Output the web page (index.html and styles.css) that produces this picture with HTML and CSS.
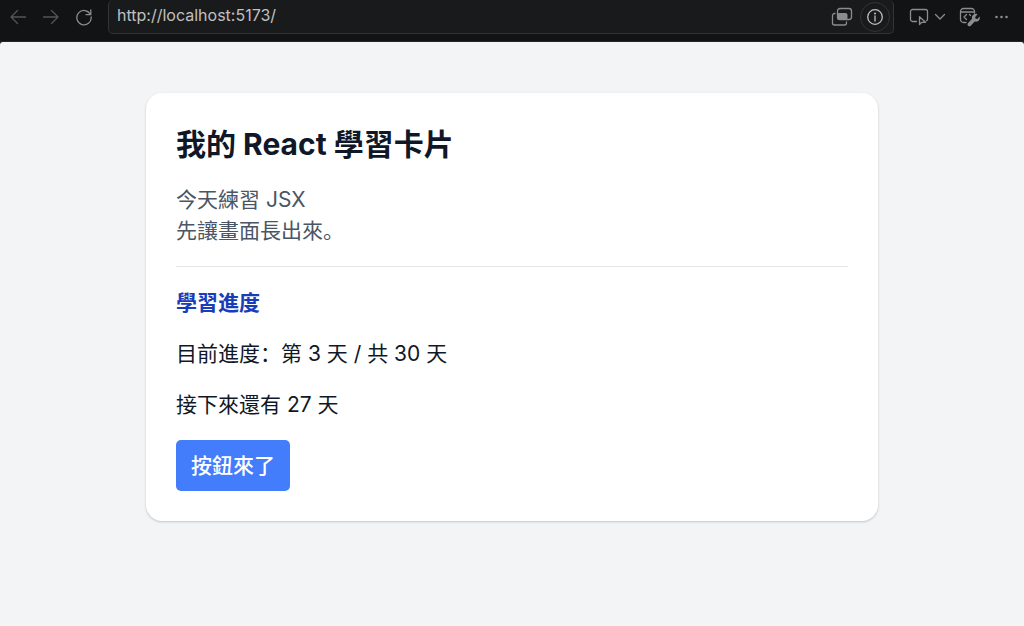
FILE: index.html
```
<!DOCTYPE html>
<html lang="zh-CN">

<head>
    <meta charset="UTF-8">
    <meta name="viewport" content="width=device-width, initial-scale=1.0">
    <title>我的 React 學習卡片</title>
    <link rel="stylesheet" href="styles.css">
</head>

<body>
    <header class="toolbar">
        <nav class="nav">
            <button class="icon-btn dim" type="button" aria-label="上一頁">
                <svg width="18" height="18" viewBox="0 0 18 18"><path d="M16.500 9H2M8.500 2.500L2 9l6.500 6.500" /></svg>
            </button>
            <button class="icon-btn dim" type="button" aria-label="下一頁">
                <svg width="18" height="18" viewBox="0 0 18 18"><path d="M1.500 9H16M9.500 2.500L16 9l-6.500 6.500" /></svg>
            </button>
            <button class="icon-btn" type="button" aria-label="重新整理">
                <svg width="18" height="18" viewBox="0 0 18 18"><path d="M15.500 6.500A7.200 7.200 0 1 0 16.200 9M15.800 2v4.700h-4.700" /></svg>
            </button>
        </nav>
        <div class="address">
            <input class="url" type="text" value="http://localhost:5173/" aria-label="網址">
            <button class="icon-btn" type="button" aria-label="視窗">
                <svg width="22" height="20" viewBox="0 0 22 20">
                    <rect x="6.500" y="1.500" width="14" height="11" rx="2.500" />
                    <path d="M4 6.500h-.5a2 2 0 0 0-2 2v7.500a2 2 0 0 0 2 2h10a2 2 0 0 0 2-2v-1" />
                    <rect class="solid" x="6" y="6" width="10.500" height="7" rx="2" />
                </svg>
            </button>
            <button class="icon-btn info" type="button" aria-label="網站資訊">
                <svg width="18" height="18" viewBox="0 0 18 18">
                    <circle cx="9" cy="9" r="7.300" />
                    <path d="M9 8v5" />
                    <circle class="solid" cx="9" cy="5.500" r="1" />
                </svg>
            </button>
        </div>
        <div class="tools">
            <button class="icon-btn" type="button" aria-label="選取元素">
                <svg width="20" height="18" viewBox="0 0 20 18">
                    <path d="M7.500 13.500h-4a2 2 0 0 1-2-2v-8a2 2 0 0 1 2-2h13a2 2 0 0 1 2 2v7.500a2 2 0 0 1-1 1.800" />
                    <path d="M10.500 8.800v7.700l2.200-2.200h3.800z" />
                </svg>
            </button>
            <button class="icon-btn" type="button" aria-label="展開">
                <svg width="12" height="18" viewBox="0 0 12 18"><path d="M1.500 6.500L6 11l4.500-4.500" /></svg>
            </button>
            <button class="icon-btn devtools" type="button" aria-label="開發工具">
                <svg width="22" height="20" viewBox="0 0 22 20">
                    <path d="M7 15.500H4.500a3 3 0 0 1-3-3v-8a3 3 0 0 1 3-3h8a3 3 0 0 1 3 3V6M1.500 5h14M7.500 7.500L5 10l2.500 2.500M10.500 7.500l1 1" />
                    <path class="solid" d="M18.500 7.200l-2.300 2.900.4 1.700 1.700.2 2.400-2.500c.8 3.500-2 5.800-5 5.100L11.800 18.800c-2 1.500-4.300-.6-2.900-2.600l4.100-4.500c-.8-3.200 2.400-5.900 5.500-4.500z" />
                </svg>
            </button>
            <button class="icon-btn" type="button" aria-label="更多">
                <svg width="16" height="18" viewBox="0 0 16 18">
                    <circle class="solid" cx="2.500" cy="9" r="1.300" />
                    <circle class="solid" cx="7.500" cy="9" r="1.300" />
                    <circle class="solid" cx="12.500" cy="9" r="1.300" />
                </svg>
            </button>
        </div>
    </header>

    <main class="page">
        <article class="card">
            <h1 class="title">我的 React 學習卡片</h1>
            <p class="intro">今天練習 JSX<br>先讓畫面長出來。</p>
            <section class="progress">
                <h2 class="subtitle">學習進度</h2>
                <p>目前進度：第 3 天 / 共 30 天</p>
                <p>接下來還有 27 天</p>
                <button class="action" type="button">按鈕來了</button>
            </section>
        </article>
    </main>
</body>

</html>
```
FILE: styles.css
```
* {
    box-sizing: border-box;
    margin: 0;
    padding: 0;
}

body {
    min-height: 100vh;
    background-color: #121315;
    color: #101828;
    font-family: Inter, "Noto Sans CJK SC", sans-serif;
    font-size: 21px;
    line-height: 31px;
    display: flex;
    flex-direction: column;
}

button,
input {
    font: inherit;
    border: 0;
    background: none;
}

/* 瀏覽器工具列 */
.toolbar {
    display: flex;
    align-items: flex-start;
    height: 42px;
    padding: 0 14px 0 9px;
    border-bottom: 1px solid #242527;
}

.nav,
.tools {
    display: flex;
    align-items: center;
    height: 33px;
}

.nav {
    gap: 15px;
    margin-right: 15px;
}

.tools {
    gap: 5px;
    margin-left: 15px;
}

.icon-btn {
    display: flex;
    color: #8c8c8c;
}

.icon-btn svg {
    fill: none;
    stroke: currentColor;
    stroke-width: 1.3;
    stroke-linecap: round;
    stroke-linejoin: round;
}

.icon-btn .solid {
    fill: currentColor;
    stroke: none;
}

.icon-btn.dim {
    color: #555;
}

.address {
    flex: 1;
    display: flex;
    align-items: center;
    gap: 7px;
    height: 34px;
    padding: 0 3px 0 8px;
    background-color: #191a1c;
    border: 1px solid #333436;
    border-top: 0;
    border-radius: 5px;
}

.url {
    flex: 1;
    min-width: 0;
    height: 34px;
    padding-bottom: 4px;
    color: #c0c0c0;
    font-size: 16px;
}

.icon-btn.info {
    padding: 5px;
    color: #c0c0c0;
    border: 1px solid #333436;
    border-radius: 50%;
}

.devtools {
    margin: 0 8px;
}

/* 頁面 */
.page {
    flex: 1;
    padding: 51px 20px;
    background-color: #f3f4f6;
    border-radius: 3px 3px 0 0;
}

.card {
    max-width: 732px;
    margin: 0 auto;
    padding: 31px 30px 30px;
    background-color: #fff;
    border-radius: 16px;
    box-shadow: 0 1px 3px rgba(0, 0, 0, 0.1), 0 1px 2px rgba(0, 0, 0, 0.1);
}

.title {
    font-size: 30px;
    line-height: 40px;
    font-weight: 700;
}

.intro {
    margin: 20px 0;
    color: #4a5565;
}

.progress {
    display: flex;
    flex-direction: column;
    align-items: flex-start;
    gap: 20px;
    padding-top: 20px;
    border-top: 1px solid #e5e7eb;
}

.subtitle {
    color: #193cb8;
    font-size: 21px;
    font-weight: 700;
}

.action {
    padding: 10px 15px;
    color: #fff;
    background-color: #437dfc;
    border-radius: 5px;
    font-weight: 500;
    cursor: pointer;
}
```
